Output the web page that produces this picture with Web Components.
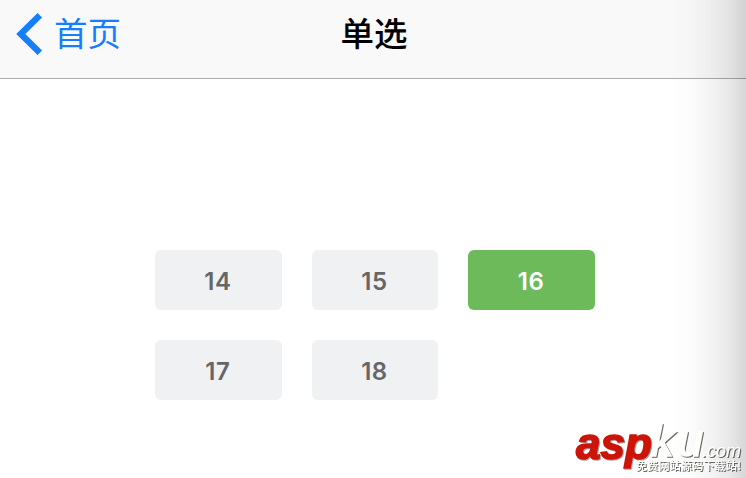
<!DOCTYPE html>
<html lang="zh-CN">
<head>
<meta charset="utf-8">
<title>单选</title>
<style>
    body {
        margin: 0;
        font-family: Inter, "Noto Sans CJK SC", sans-serif;
        background: #ffffff;
    }
</style>
</head>
<body>
<app-screen>
    <nav-bar slot="header" back="首页">单选</nav-bar>
    <radio-grid value="16">
        <radio-tile value="14">14</radio-tile>
        <radio-tile value="15">15</radio-tile>
        <radio-tile value="16">16</radio-tile>
        <radio-tile value="17">17</radio-tile>
        <radio-tile value="18">18</radio-tile>
    </radio-grid>
    <site-mark slot="overlay"></site-mark>
</app-screen>

<script>
class AppScreen extends HTMLElement {

    constructor() {
        super();

        const shadowRoot = this.attachShadow({mode: 'open'});

        shadowRoot.innerHTML = `
            <style>
                :host {
                    display: flex;
                    flex-direction: column;
                    position: relative;
                    height: 478px;
                    overflow: hidden;
                }
                main {
                    flex: 1;
                    padding: 171px 151px 0 155px;
                }
                #edge {
                    position: absolute;
                    top: 0;
                    right: 0;
                    bottom: 0;
                    width: 76px;
                    pointer-events: none;
                    background: linear-gradient(to right, rgba(0, 0, 0, 0), rgba(0, 0, 0, 0.012) 25%, rgba(0, 0, 0, 0.048) 55%, rgba(0, 0, 0, 0.095) 80%, rgba(0, 0, 0, 0.16));
                }
            </style>

            <slot name="header"></slot>
            <main><slot></slot></main>
            <div id="edge"></div>
            <slot name="overlay"></slot>
        `;
    }
}

class NavBar extends HTMLElement {

    static get observedAttributes() {
        return ['back'];
    }

    constructor() {
        super();

        const shadowRoot = this.attachShadow({mode: 'open'});

        shadowRoot.innerHTML = `
            <style>
                :host {
                    display: grid;
                    grid-template-columns: 1fr auto 1fr;
                    box-sizing: border-box;
                    height: 79px;
                    padding: 0 14px 10px 16px;
                    align-items: center;
                    background: #f9f9f9;
                    border-bottom: 1px solid #acacac;
                    font: 33.5px/48px "Noto Sans CJK SC", sans-serif;
                }
                #back {
                    display: flex;
                    align-items: center;
                    gap: 11px;
                    color: #157efb;
                    cursor: pointer;
                }
                svg {
                    display: block;
                }
                #label {
                    padding-bottom: 4px;
                }
                h1 {
                    margin: 0;
                    padding-bottom: 4px;
                    font: inherit;
                    font-weight: 500;
                    color: #000000;
                }
            </style>

            <div id="back">
                <svg width="27" height="42" viewBox="0 0 27 42">
                    <path d="M23.8 2.3 L4.8 21 L23.8 39.7" fill="none" stroke="currentColor" stroke-width="6.4"/>
                </svg>
                <span id="label"></span>
            </div>
            <h1><slot></slot></h1>
        `;
    }

    attributeChangedCallback(attr, oldVal, newVal) {
        this.shadowRoot.querySelector('#label').textContent = newVal;
    }
}

class RadioTile extends HTMLElement {

    constructor() {
        super();

        const shadowRoot = this.attachShadow({mode: 'open'});

        shadowRoot.innerHTML = `
            <style>
                :host {
                    display: flex;
                    align-items: center;
                    justify-content: center;
                    height: 60px;
                    box-sizing: border-box;
                    padding: 2px 1px 0 0;
                    border-radius: 6px;
                    background: #f0f1f3;
                    color: #666666;
                    font: 600 24px Inter, sans-serif;
                    letter-spacing: 0.6px;
                    cursor: pointer;
                }
                :host([checked]) {
                    background: #6dba5a;
                    color: #ffffff;
                }
            </style>

            <slot></slot>
        `;
    }
}

class RadioGrid extends HTMLElement {

    constructor() {
        super();

        const shadowRoot = this.attachShadow({mode: 'open'});

        shadowRoot.innerHTML = `
            <style>
                :host {
                    display: grid;
                    grid-template-columns: repeat(3, 1fr);
                    gap: 30px;
                }
            </style>

            <slot></slot>
        `;
    }

    connectedCallback() {
        const tiles = this.querySelectorAll('radio-tile');

        const select = value => {
            tiles.forEach(tile => {
                tile.toggleAttribute('checked', tile.getAttribute('value') === value);
            });
        };

        select(this.getAttribute('value'));

        tiles.forEach(tile => {
            tile.addEventListener('click', () => select(tile.getAttribute('value')));
        });
    }
}

class SiteMark extends HTMLElement {

    constructor() {
        super();

        const shadowRoot = this.attachShadow({mode: 'open'});

        shadowRoot.innerHTML = `
            <style>
                :host {
                    position: absolute;
                    right: 0;
                    bottom: 0;
                    width: 174px;
                    height: 62px;
                }
                svg {
                    display: block;
                }
                text {
                    font-family: "Liberation Sans", Arial, sans-serif;
                    font-style: italic;
                }
                .light {
                    fill: #fffffb;
                    filter: drop-shadow(1px 1px 0.6px rgba(0, 0, 0, 0.6));
                }
                .thick {
                    stroke: #fffffb;
                    stroke-width: 1.6;
                }
                .red {
                    fill: #cc1408;
                    stroke: #cc1408;
                    stroke-width: 1.6;
                    font-weight: bold;
                    filter: drop-shadow(1px 1px 0.5px rgba(0, 0, 0, 0.35));
                }
                .slogan {
                    font-family: "Noto Sans CJK SC", sans-serif;
                    font-style: normal;
                    font-weight: 500;
                }
            </style>

            <svg width="174" height="62" viewBox="0 0 174 62">
                <text class="red" x="4" y="42.5" font-size="45" textLength="76" lengthAdjust="spacingAndGlyphs">asp</text>
                <text class="light thick" x="79" y="40" font-size="45" textLength="52">ku</text>
                <text class="light" x="130" y="41" font-size="18" textLength="39" lengthAdjust="spacingAndGlyphs">.com</text>
                <text class="light slogan" x="64" y="54" font-size="11" textLength="105">免费网站源码下载站!</text>
            </svg>
        `;
    }
}

customElements.define('app-screen', AppScreen);
customElements.define('nav-bar', NavBar);
customElements.define('radio-tile', RadioTile);
customElements.define('radio-grid', RadioGrid);
customElements.define('site-mark', SiteMark);
</script>
</body>
</html>
